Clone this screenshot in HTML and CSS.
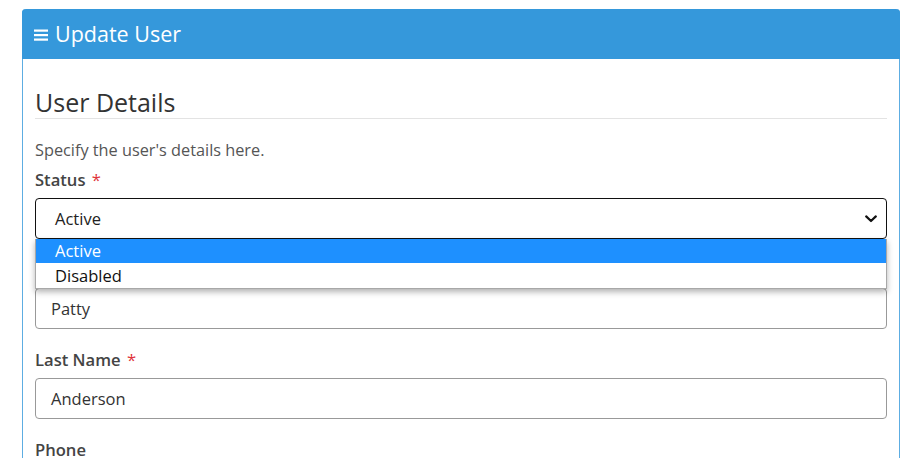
FILE: index.html
```html
<!DOCTYPE html>
<html>
<head>
<meta charset="utf-8">
<link rel="stylesheet" href="styles.css">
</head>
<body>
<div class="page">
  <div class="card">
    <div class="card-header">
      <svg class="menu-icon" width="14" height="12" viewBox="0 0 14 12"><rect x="0" y="0.5" width="14" height="2.2" fill="#fff"/><rect x="0" y="5" width="14" height="2.2" fill="#fff"/><rect x="0" y="9.5" width="14" height="2.2" fill="#fff"/></svg>
      <span>Update User</span>
    </div>
    <div class="card-body">
      <h3 class="section-title">User Details</h3>
      <p class="desc">Specify the user's details here.</p>
      <div class="form-group">
        <label class="label">Status <span class="req">*</span></label>
        <div class="select-wrap">
          <div class="select">
            <span>Active</span>
            <svg class="chev" width="12" height="8" viewBox="0 0 12 8"><path d="M1.2 1.4 L6 6 L10.8 1.4" fill="none" stroke="#111" stroke-width="2.2" stroke-linecap="round" stroke-linejoin="round"/></svg>
          </div>
          <ul class="options">
            <li class="opt selected">Active</li>
            <li class="opt">Disabled</li>
          </ul>
        </div>
      </div>
      <div class="form-group">
        <label class="label hidden-label">First Name <span class="req">*</span></label>
        <div class="input">Patty</div>
      </div>
      <div class="form-group">
        <label class="label">Last Name <span class="req">*</span></label>
        <div class="input">Anderson</div>
      </div>
      <div class="form-group">
        <label class="label">Phone</label>
      </div>
    </div>
  </div>
</div>
</body>
</html>
```
FILE: styles.css
```css
* { box-sizing: border-box; }
html, body { margin: 0; padding: 0; background: #fff; height: 100%; overflow: hidden; }
body { font-family: "Open Sans", "Liberation Sans", sans-serif; color: #333; }
.page { padding: 9px 20px 0 22px; }
.card {
  border: 1px solid #5dade2;
  border-top: none;
  border-radius: 4px 4px 0 0;
  height: 470px;
}
.card-header {
  background: #3598db;
  color: #fff;
  height: 50px;
  margin: 0 -1px;
  border-radius: 4px 4px 0 0;
  display: flex;
  align-items: center;
  padding-left: 12px;
  font-size: 21.5px;
  line-height: 50px;
}
.menu-icon { margin-right: 7px; margin-top: 1px; }
.card-body { padding: 27px 12px 0 12px; }
.section-title {
  margin: 0;
  font-size: 25px;
  font-weight: 400;
  line-height: 32px;
  color: #333;
  border-bottom: 1px solid #e3e3e3;
}
.desc {
  margin: 20px 0 8px 0;
  font-size: 16.3px;
  line-height: 22px;
  color: #555;
}
.form-group { margin-bottom: 20px; }
.label {
  display: block;
  font-size: 16.6px;
  font-weight: 600;
  line-height: 22px;
  color: #444;
  margin-bottom: 7px;
}
.hidden-label { visibility: hidden; }
.req { color: #e0333a; font-weight: 400; margin-left: 2px; }
.select-wrap { position: relative; }
.select {
  height: 41px;
  border: 1px solid #111;
  border-radius: 4px;
  display: flex;
  align-items: center;
  justify-content: space-between;
  padding: 0 9px 0 19px;
  font-size: 16.5px;
  color: #222;
}
.chev { display: block; }
.options {
  position: absolute;
  left: 0;
  right: 0;
  top: 41px;
  margin: 0;
  padding: 0;
  list-style: none;
  background: #fff;
  border: 1px solid #a8a8a8;
  border-top: none;
  box-shadow: 0 3px 6px rgba(0,0,0,0.3);
  z-index: 5;
}
.opt {
  height: 25px;
  line-height: 25px;
  padding-left: 19px;
  font-size: 16.5px;
  color: #111;
}
.opt.selected { background: #1e90ff; color: #fff; height: 24px; line-height: 24px; }
.input {
  height: 41px;
  border: 1px solid #999;
  border-radius: 4px;
  padding: 0 15px;
  display: flex;
  align-items: center;
  font-size: 16.5px;
  color: #333;
}
```
